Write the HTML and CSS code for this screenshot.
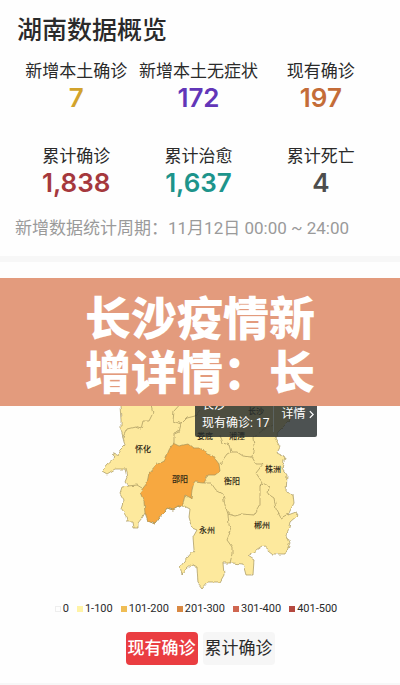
FILE: index.html
```
<!DOCTYPE html>
<html lang="zh-CN">
<head>
  <meta charset="UTF-8">
  <meta name="viewport" content="width=device-width, initial-scale=1.0">
  <title>湖南数据概览</title>
  <link rel="stylesheet" href="styles.css">
</head>
<body>
  <section class="overview">
    <h2 class="title">湖南数据概览</h2>
    <dl class="stats">
      <div class="stat">
        <dt>新增本土确诊</dt>
        <dd class="yellow">7</dd>
      </div>
      <div class="stat">
        <dt>新增本土无症状</dt>
        <dd class="purple">172</dd>
      </div>
      <div class="stat">
        <dt>现有确诊</dt>
        <dd class="orange">197</dd>
      </div>
      <div class="stat">
        <dt>累计确诊</dt>
        <dd class="red">1,838</dd>
      </div>
      <div class="stat">
        <dt>累计治愈</dt>
        <dd class="teal">1,637</dd>
      </div>
      <div class="stat">
        <dt>累计死亡</dt>
        <dd class="gray">4</dd>
      </div>
    </dl>
    <p class="period"><span>新增数据统计周期：</span><span>11月12日 00:00 ~ 24:00</span></p>
  </section>

  <div class="banner">
    <h1>长沙疫情新增详情：长</h1>
  </div>

  <section class="map-section">
    <div class="map">
      <svg viewBox="0 406 400 189" role="img" aria-label="湖南疫情地图">
        <defs>
          <!-- roughens the borders between cities -->
          <filter id="rough" x="-5%" y="-5%" width="110%" height="110%">
            <feTurbulence type="fractalNoise" baseFrequency="0.2" numOctaves="1" seed="4" result="noise" />
            <feDisplacementMap in="SourceGraphic" in2="noise" scale="4" xChannelSelector="R" yChannelSelector="G" />
          </filter>
        </defs>
        <g class="regions" filter="url(#rough)">
          <path d="M120 396 L120 406 121 420 121 430 123 437 125 445 120 450 118 455 114 453 113 460 107 465 102 471 107 474 115 469 125 469 127 477 125 482 128 486 122 487 120 493 124 500 121 509 126 516 127 522 133 522 134 528 138 528 138 523 142 518 145 513 147 514 148 521 155 524 162 515 167 508 173 510 182 505 190 509 189 517 192 528 197 530 193 537 194 550 187 558 180 567 182 574 187 568 192 564 197 567 198 583 202 588 207 582 220 582 224 575 223 563 232 563 243 564 246 575 253 575 254 560 248 556 257 550 263 546 273 554 285 554 290 543 287 535 290 522 298 515 296 512 288 515 294 503 293 494 286 492 287 475 282 468 285 457 277 453 280 447 275 438 278 432 290 420 292 406 292 396 Z" />
          <path class="hot" d="M169 450 L173 443 179 446 188 444 193 448 202 448 207 454 213 456 219 464 220 471 215 475 208 475 204 483 194 482 192 490 191 498 185 495 183 504 173 510 167 508 162 515 155 524 148 521 145 513 144 502 140 492 147 483 149 473 156 465 165 460 Z" />
          <path class="line" d="M123 437 L127 429 135 427 141 429 143 421 149 421 153 413 150 400" />
          <path class="line" d="M184 400 L174 411 173 421 181 424 179 432 174 434 174 443" />
          <path class="line" d="M181 424 L187 418 195 416 200 410" />
          <path class="line" d="M128 486 L137 485 142 488" />
          <path class="line" d="M220 435 L223 443 229 445 231 452 237 452 243 456 252 457 254 445 253 438 263 430 273 424" />
          <path class="line" d="M220 464 L227 454 231 452" />
          <path class="line" d="M252 457 L256 464 263 464 256 473 262 482 260 486" />
          <path class="line" d="M204 483 L211 483 216 490 223 494 225 505 228 514 235 516 242 514 254 515 260 505 260 486 263 483 269 487 268 494 274 498 276 509 281 518 288 514" />
          <path class="line" d="M228 514 L229 525 231 530 227 540 232 547 232 555 230 563" />
        </g>
        <g class="names">
          <text x="143" y="452">怀化</text>
          <text x="180" y="482">邵阳</text>
          <text x="205" y="439">娄底</text>
          <text x="237" y="439">湘潭</text>
          <text x="256" y="414">长沙</text>
          <text x="273" y="472">株洲</text>
          <text x="232" y="484">衡阳</text>
          <text x="207" y="533">永州</text>
          <text x="262" y="528">郴州</text>
        </g>
      </svg>
      <div class="tooltip">
        <div class="tooltip-text">
          <div>长沙</div>
          <div>现有确诊: 17</div>
        </div>
        <a class="tooltip-link" href="#">详情
          <svg class="arrow" viewBox="0 0 6 10"><path d="M1 1 L5 5 L1 9" /></svg>
        </a>
      </div>
    </div>

    <ul class="legend">
      <li><i class="swatch level-0"></i>0</li>
      <li><i class="swatch level-1"></i>1-100</li>
      <li><i class="swatch level-2"></i>101-200</li>
      <li><i class="swatch level-3"></i>201-300</li>
      <li><i class="swatch level-4"></i>301-400</li>
      <li><i class="swatch level-5"></i>401-500</li>
    </ul>

    <div class="tabs">
      <button class="tab active" type="button">现有确诊</button>
      <button class="tab" type="button">累计确诊</button>
    </div>
  </section>
</body>
</html>
```

FILE: styles.css
```
* {
  margin: 0;
  padding: 0;
  box-sizing: border-box;
}

body {
  font-family: Roboto, "Noto Sans CJK SC", sans-serif;
  background-color: #fefefe;
  color: #2a2a2a;
}

.overview {
  padding: 13px 18px 16px 15px;
  border-bottom: 6px solid #f7f7f7;
}

.title {
  padding-left: 2px;
  font-size: 25px;
  font-weight: 500;
  line-height: 36px;
}

.stats {
  display: grid;
  grid-template-columns: repeat(3, 1fr);
  row-gap: 31px;
  margin-top: 10px;
  text-align: center;
}

.stat dt {
  font-size: 17px;
  line-height: 24px;
  white-space: nowrap;
}

.stat dd {
  font-family: Inter, sans-serif;
  font-size: 26px;
  font-weight: 600;
  line-height: 30px;
}

.yellow {
  color: #d2a32c;
}

.purple {
  color: #6236b8;
}

.orange {
  color: #c46c38;
}

.red {
  color: #a5383d;
}

.teal {
  color: #1d948b;
}

.gray {
  color: #4d4d4d;
}

.period {
  display: flex;
  flex-wrap: wrap;
  margin-top: 18px;
  font-size: 17px;
  line-height: 24px;
  color: #9a9a9a;
}

.banner {
  display: flex;
  justify-content: center;
  margin-top: 16px;
  padding: 10px 0;
  background-color: #e39b7d;
}

.banner h1 {
  max-width: 5em;
  font-family: "Noto Sans CJK SC", sans-serif;
  font-size: 46px;
  font-weight: 900;
  line-height: 54px;
  line-break: anywhere;
  color: #fff;
}

.map-section {
  border-bottom: 6px solid #f7f7f7;
}

.map {
  position: relative;
  overflow: hidden;
}

.map > svg {
  display: block;
  width: 100%;
}

.regions {
  fill: #fde99d;
  stroke: #a3945c;
  stroke-width: 0.7;
}

.regions .hot {
  fill: #f7a83f;
}

.regions .line {
  fill: none;
}

.names {
  font-size: 8px;
  font-weight: 500;
  fill: #2b2413;
  text-anchor: middle;
}

.tooltip {
  position: absolute;
  top: -15px;
  left: calc(50% - 5px);
  display: flex;
  padding: 5px 0 5px 7px;
  border-radius: 2px;
  background-color: rgba(38, 44, 44, 0.82);
  color: #fff;
  font-size: 12px;
  line-height: 18px;
}

.tooltip-text {
  padding-right: 4px;
  border-right: 1px solid #5c6361;
}

.tooltip-link {
  display: flex;
  align-items: center;
  gap: 4px;
  padding: 0 3px 0 7px;
  color: #fff;
  text-decoration: none;
}

.arrow {
  width: 5px;
  height: 9px;
  fill: none;
  stroke: #fff;
  stroke-width: 1.5;
}

.legend {
  display: flex;
  justify-content: center;
  gap: 8px;
  margin-top: 4px;
  padding-right: 8px;
  list-style: none;
  font-size: 11px;
  line-height: 20px;
}

.legend li {
  display: flex;
  align-items: center;
  gap: 2px;
}

.swatch {
  width: 6px;
  height: 6px;
}

.level-0 {
  border: 1px solid #eee;
}

.level-1 {
  background-color: #fff3a6;
}

.level-2 {
  background-color: #efbd55;
}

.level-3 {
  background-color: #d98943;
}

.level-4 {
  background-color: #cf6650;
}

.level-5 {
  background-color: #b5483f;
}

.tabs {
  display: flex;
  justify-content: center;
  gap: 5px;
  padding: 13px 0 18px;
}

.tab {
  padding: 0 2px;
  border: none;
  border-radius: 4px;
  background-color: #f6f6f6;
  color: #2a2a2a;
  font-family: inherit;
  font-size: 17px;
  line-height: 33px;
  cursor: pointer;
}

.tab.active {
  background-color: #ea3d41;
  color: #fff;
  font-weight: 500;
}
```
